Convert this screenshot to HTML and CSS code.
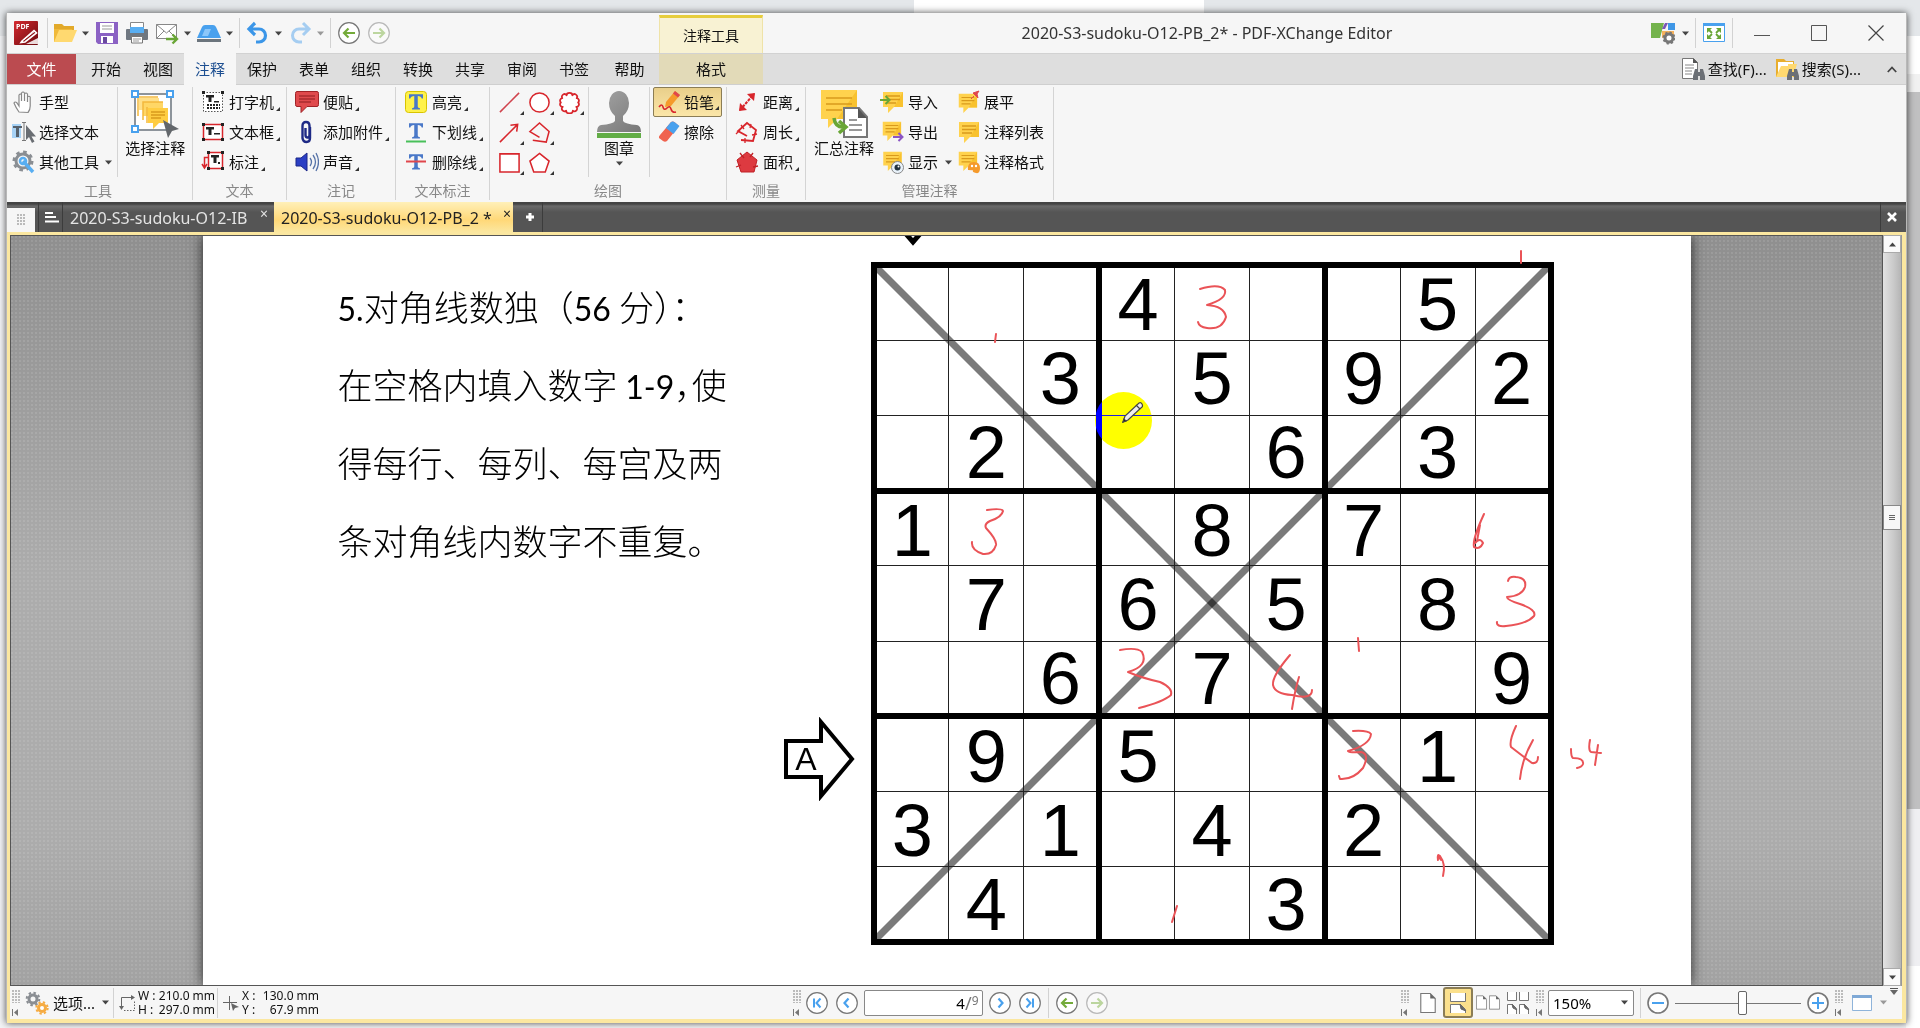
FILE: index.html
```html
<!DOCTYPE html>
<html lang="zh-CN">
<head>
<meta charset="utf-8">
<title>2020-S3-sudoku-O12-PB_2* - PDF-XChange Editor</title>
<link rel="stylesheet" href="styles.css">
</head>
<body>
<svg class="defs" aria-hidden="true">
  <defs>
    <linearGradient id="redg" x1="0" y1="0" x2="1" y2="1"><stop offset="0" stop-color="#d42a2f"/><stop offset="1" stop-color="#6d0a0f"/></linearGradient>
    <linearGradient id="gry" x1="0" y1="0" x2="1" y2="1"><stop offset="0" stop-color="#a4a4a4"/><stop offset="1" stop-color="#777"/></linearGradient>
  </defs>
  <symbol id="caret" viewBox="0 0 7 5"><path d="M0 0.500h7L3.500 4.500z" fill="currentColor"/></symbol>
  <symbol id="note" viewBox="0 0 24 24"><path d="M3 2h20v15h-9l-6 6v-6H3z" fill="#ffd24d"/><path d="M23 2v15h-9z" fill="#f8c22f"/><path d="M6 6h14M6 9.500h14M6 13h10" stroke="#d99a1c" stroke-width="1.300"/></symbol>
  <symbol id="back" viewBox="0 0 22 22"><circle cx="11" cy="11" r="10.300" fill="#fff" stroke="#777" stroke-width="1.200"/><path d="M17 11H6M10.500 6.500L6 11l4.500 4.500" fill="none" stroke="#74ab3a" stroke-width="2.200"/></symbol>
  <symbol id="fwd" viewBox="0 0 22 22"><circle cx="11" cy="11" r="10.300" fill="#fafafa" stroke="#b9b9b9" stroke-width="1.200"/><path d="M5 11h11M11.500 6.500L16 11l-4.500 4.500" fill="none" stroke="#bcd69f" stroke-width="2.200"/></symbol>
  <symbol id="tee" viewBox="0 0 16 18"><path d="M0 0h16v5h-1.500Q14 2 10 2v12q0 2 2.500 2v1.500h-9V16Q6 16 6 14V2Q2 2 1.500 5H0z" fill="#4a78c8"/></symbol>
  <symbol id="bino" viewBox="0 0 12 11"><path d="M2 0h3v3h2V0h3l2 7v4H7V7H5v4H0V7z" fill="#6b6f75"/></symbol>
  <symbol id="sheet" viewBox="0 0 14 18"><path d="M.500.500H9L13.500 5v12.500H.500z" fill="#fff" stroke="#777"/><path d="M9 .500V5h4.500z" fill="#666"/></symbol>
  <symbol id="first" viewBox="0 0 6 7"><path d="M.500 0v7" stroke="#777"/><path d="M6 0v7L2 3.500z" fill="#777"/></symbol>
</svg>

<div class="behind-tab"></div>
<div class="behind-scroll"></div>

<div class="window">
  <header class="titlebar">
    <svg class="logo" viewBox="0 0 24 24"><rect width="24" height="24" rx="1" fill="url(#redg)"/><text x="2" y="8" class="logo-text">PDF</text><path d="M8 20L20 9.500l2.500 2.500L11 21l-4 .500z" fill="none" stroke="#fff" stroke-width="1.600"/><path d="M10 18.500L21 10" stroke="#fff" stroke-width="1"/><path d="M12 23h12v-6z" fill="#fff" opacity=".85"/></svg>
    <span class="vsep"></span>
    <nav class="quick" aria-label="快速访问">
      <button class="qbtn" aria-label="打开"><svg class="i24" viewBox="0 0 24 24"><path d="M1 3h8l2 2h10v6H1z" fill="#e2a92a"/><path d="M1 5v16h18V8H1z" fill="#f0b93a"/><path d="M1 21L6 9h18l-5 12z" fill="#ffd970"/></svg><svg class="car"><use href="#caret"/></svg></button>
      <button class="qbtn" aria-label="保存"><svg class="i24" viewBox="0 0 24 24"><path d="M1 1h22v22H3l-2-2z" fill="#8b62c4"/><path d="M5 2h14v10H5z" fill="#fff"/><path d="M7 5h10M7 8h10" stroke="#999"/><path d="M6 15h12v7H6z" fill="#fff"/><path d="M8 16h4v6H8z" fill="#6a4aa0"/></svg></button>
      <button class="qbtn" aria-label="打印"><svg class="i24" viewBox="0 0 24 24"><path d="M5.500 1.500h13V8h-13z" fill="#fff" stroke="#888"/><rect x="1" y="8" width="22" height="11" rx="1" fill="#6f7780"/><path d="M5 6h14v6H5z" fill="#58aef2"/><path d="M6.500 15.500h11V22h-11z" fill="#fff" stroke="#777"/><path d="M8 18h8M8 20h6" stroke="#999"/></svg></button>
      <button class="qbtn" aria-label="邮件"><svg class="i24" viewBox="0 0 24 24"><path d="M1.500 3.500h20v14h-20z" fill="#fff" stroke="#888"/><path d="M1.500 3.500l10 8.500 10-8.500M1.500 17.500L9 10M21.500 17.500L14 10" fill="none" stroke="#888"/><path d="M11 18h11M17.500 13.500L22 18l-4.500 4.500" fill="none" stroke="#69a636" stroke-width="2.400"/></svg><svg class="car"><use href="#caret"/></svg></button>
      <button class="qbtn" aria-label="扫描"><svg class="i24" viewBox="0 0 24 24"><path d="M0 17L5 6q1-2 3-2h8q2 0 3 2l5 11z" fill="#49a1ee"/><path d="M5 15l3-7h6l-3 7z" fill="#8cc7fa"/><path d="M0 18h24v3H0z" fill="#6c757d"/></svg><svg class="car"><use href="#caret"/></svg></button>
      <span class="vsep"></span>
      <button class="qbtn" aria-label="撤销"><svg class="i24" viewBox="0 0 24 24"><path d="M4 8h9a6 6 0 0 1 0 13h-3M9 2L3 8l6 6" fill="none" stroke="#3b96e8" stroke-width="3.200"/></svg><svg class="car"><use href="#caret"/></svg></button>
      <button class="qbtn" aria-label="重做"><svg class="i24" viewBox="0 0 24 24"><path d="M20 8h-9a6 6 0 0 0 0 13h3M15 2l6 6-6 6" fill="none" stroke="#a5cdf1" stroke-width="3"/></svg><svg class="car dim"><use href="#caret"/></svg></button>
      <span class="vsep"></span>
      <button class="round" aria-label="后退"><svg><use href="#back"/></svg></button>
      <button class="round" aria-label="前进"><svg><use href="#fwd"/></svg></button>
    </nav>
    <div class="context">注释工具</div>
    <h1 class="title">2020-S3-sudoku-O12-PB_2* - PDF-XChange Editor</h1>
    <div class="winbtns">
      <button class="qbtn" aria-label="界面选项"><svg class="i24" viewBox="0 0 24 24"><path d="M0 2h13L9 17H0z" fill="#74b34c"/><path d="M14 2h3l-3 6h-3z" fill="#7a55b8"/><path d="M17 2h7v7h-7z" fill="#3f97e6"/><path d="M11 10h12v4l-12 3z" fill="#f6b25c"/><circle cx="18" cy="17" r="4" fill="#fff" stroke="#777" stroke-width="3"/><circle cx="18" cy="17" r="5.500" fill="none" stroke="#777" stroke-width="2" stroke-dasharray="2.200 2.100"/></svg><svg class="car"><use href="#caret"/></svg></button>
      <span class="vsep"></span>
      <button class="qbtn" aria-label="全屏"><svg class="i24" viewBox="0 0 24 24"><path d="M1.500 2.500h21v18h-21z" fill="#fff" stroke="#49a1ee"/><path d="M1 2h22v3H1z" fill="#49a1ee"/><path d="M5 7h5L5 12zM19 7v5l-5-5zM5 18v-5l5 5zM19 18h-5l5-5z" fill="#69a636"/><path d="M6 8l4 4M18 8l-4 4M6 17l4-4M18 17l-4-4" stroke="#69a636" stroke-width="1.800"/></svg></button>
      <span class="vsep"></span>
      <button class="wbtn" aria-label="最小化"><svg viewBox="0 0 16 16"><path d="M0 10.500h16" stroke="#555"/></svg></button>
      <button class="wbtn" aria-label="最大化"><svg viewBox="0 0 16 16"><path d="M.500.500h15v15H.500z" fill="none" stroke="#555"/></svg></button>
      <button class="wbtn" aria-label="关闭"><svg viewBox="0 0 16 16"><path d="M.500.500l15 15M15.500.500l-15 15" stroke="#444" stroke-width="1.200"/></svg></button>
    </div>
  </header>

  <nav class="tabs" aria-label="功能区">
    <button class="file">文件</button>
    <button class="tab">开始</button><button class="tab">视图</button><button class="tab on">注释</button><button class="tab">保护</button><button class="tab">表单</button><button class="tab">组织</button><button class="tab">转换</button><button class="tab">共享</button><button class="tab">审阅</button><button class="tab">书签</button><button class="tab help">帮助</button>
    <button class="tab fmt">格式</button>
    <div class="finders">
      <button class="find"><svg class="i24" viewBox="0 0 24 24"><path d="M1.500 1.500h11l4 4v16h-15z" fill="#fff" stroke="#777"/><path d="M12 1l5 5h-5z" fill="#555"/><path d="M4 8h9M4 11h9M4 14h7M4 17h7" stroke="#888"/><use href="#bino" x="12" y="12" width="12" height="11"/></svg>查找(F)...</button>
      <button class="find"><svg class="i24" viewBox="0 0 24 24"><path d="M1 2h8l2 2h8v16H1z" fill="#e8ae2e"/><path d="M3 5h15v12H3z" fill="#fff"/><path d="M1 20L6 9h7V7h9l-4 13z" fill="#ffd970"/><use href="#bino" x="12" y="12" width="12" height="11"/></svg>搜索(S)...</button>
      <button class="fold" aria-label="折叠"><svg viewBox="0 0 10 7"><path d="M.800 6L5 1.500 9.200 6" fill="none" stroke="#444" stroke-width="1.800"/></svg></button>
    </div>
  </nav>

  <section class="ribbon">
    <div class="group g-tools">
      <div class="gbody">
        <div class="col c-tools">
          <button class="cmd"><svg class="i24" viewBox="0 0 24 24"><path d="M7 22q-3-4-5-9 1-2 3 0l2 3V5q1.500-2 2.500 0v6V3q1.500-2 3 0v8V4q1.500-2 3 0v8V7q1.500-1.500 2.700 0v9q0 4-2.200 6.500z" fill="#fff" stroke="#888" stroke-width="1.200"/></svg>手型</button>
          <button class="cmd"><svg class="i24" viewBox="0 0 24 24"><path d="M0 4h9v14H0z" fill="#a7d2f5"/><path d="M1 6h9v2H7v9H4V8H1z" fill="#56616c"/><path d="M10 2.500h4M12 3v17M10 20.500h4" stroke="#777"/><path d="M14 5v15l3-3 3 6 2.500-1.500-3-5H24z" fill="#6a6e73"/></svg>选择文本</button>
          <button class="cmd"><svg class="i24" viewBox="0 0 24 24"><circle cx="11" cy="11" r="7" fill="none" stroke="#8a8e93" stroke-width="3"/><circle cx="11" cy="11" r="9.200" fill="none" stroke="#8a8e93" stroke-width="2.600" stroke-dasharray="3.600 3.600"/><path d="M11 11l10 11" stroke="#58aef2" stroke-width="3.400"/><circle cx="11" cy="11" r="3" fill="none" stroke="#58aef2" stroke-width="2.600"/></svg>其他工具<svg class="car"><use href="#caret"/></svg></button>
        </div>
        <button class="big b-sel"><svg class="i48" viewBox="0 0 48 48"><path d="M4 4h36v36H4z" fill="#fff" stroke="#8d949b" stroke-width="2"/><path d="M8 8h20v12H8z" fill="#ffe08a"/><path d="M12 12h20v14H12z" fill="#ffd766"/><path d="M17 18h20v15h-9l-6 6v-6h-5z" fill="#ffcd42"/><path d="M7 26V7h20M12 30V12h20M16 33V17" fill="none" stroke="#f3b83c" stroke-width="1.500"/><path d="M20 22h14M20 25h14M20 28h10" stroke="#d99a1c" stroke-width="1.300"/><g fill="#fff" stroke="#49a1ee" stroke-width="2"><path d="M1 1h6v6H1zM36 1h6v6h-6zM1 36h6v6H1z"/></g><path d="M32 30l16 9-7 2-4 7z" fill="#63676b"/></svg>选择注释</button>
      </div>
      <div class="glabel">工具</div>
    </div>

    <div class="group g-text">
      <div class="gbody"><div class="col">
        <button class="cmd more"><svg class="i24" viewBox="0 0 24 24"><path d="M2.500 2.500h19v19h-19z" fill="#fff" stroke="#555" stroke-dasharray="1.500 1.500"/><path d="M5 5h8v2.500h-2.500V12h-3V7.500H5zM13 11h5v1.500h-5z" fill="#222"/><path d="M6 15h13M6 18h13" stroke="#222" stroke-width="2" stroke-dasharray="2 1"/><path d="M1 1h3v3H1zM20 1h3v3h-3z" fill="#222"/></svg>打字机</button>
        <button class="cmd more"><svg class="i24" viewBox="0 0 24 24"><path d="M2.500 4.500h19v15h-19z" fill="#fff" stroke="#d8262c" stroke-width="1.500"/><path d="M5 7h8v2.500h-2.500V15h-3V9.500H5zM13 13h6v1.500h-6z" fill="#222"/><path d="M1 3h3v3H1zM20 3h3v3h-3zM1 18h3v3H1zM20 18h3v3h-3z" fill="#222"/></svg>文本框</button>
        <button class="cmd more"><svg class="i24" viewBox="0 0 24 24"><path d="M7.500 2.500h14v16h-14z" fill="#fff" stroke="#d8262c" stroke-width="1.500"/><path d="M10 5h8v2.500h-2.500V13h-3V7.500H10zM17 12h2v2h-2z" fill="#222"/><path d="M6 1h3v3H6zM20 1h3v3h-3zM6 17h3v3H6zM20 17h3v3h-3z" fill="#222"/><path d="M7 7.500H3.500V18M1 14l2.500 4L6 14" fill="none" stroke="#d8262c" stroke-width="1.500"/></svg>标注</button>
      </div></div>
      <div class="glabel">文本</div>
    </div>

    <div class="group g-note">
      <div class="gbody"><div class="col">
        <button class="cmd more"><svg class="i24" viewBox="0 0 24 24"><path d="M2 1.500h20q1.500 0 1.500 2v11q0 2-1.500 2H12l-6 6v-6H2q-1.500 0-1.500-2v-11q0-2 1.500-2z" fill="#e04a4d" stroke="#a02327"/><path d="M4 6h16M4 9h16M4 12h12" stroke="#8d1c20" stroke-width="1.200"/></svg>便贴</button>
        <button class="cmd more"><svg class="i24" viewBox="0 0 24 24"><path d="M15 7v11q0 4-3.500 4T7.500 18V6q0-4 3.500-4t3.500 4v9q0 2.500-2 2.500t-2-2.500V8" fill="none" stroke="#1e2a86" stroke-width="2.400"/></svg>添加附件</button>
        <button class="cmd more"><svg class="i24" viewBox="0 0 24 24"><path d="M1 8h5l6-5v18l-6-5H1z" fill="#2b3fc4" stroke="#1a2688"/><path d="M15 8q3 4 0 8M18 5q5 7 0 14M21 3q5 9 0 18" fill="none" stroke="#5673a8" stroke-width="1.300"/></svg>声音</button>
      </div></div>
      <div class="glabel">注记</div>
    </div>

    <div class="group g-mark">
      <div class="gbody"><div class="col">
        <button class="cmd more"><svg class="i24" viewBox="0 0 24 24"><rect x="1.500" y="1.500" width="21" height="21" rx="3" fill="#fff24a" stroke="#d9c400"/><use href="#tee" x="5" y="4" width="14" height="16"/></svg>高亮</button>
        <button class="cmd more"><svg class="i24" viewBox="0 0 24 24"><use href="#tee" x="5" y="3" width="14" height="16"/><path d="M2 21.500h20" stroke="#49c05a" stroke-width="2"/></svg>下划线</button>
        <button class="cmd more"><svg class="i24" viewBox="0 0 24 24"><use href="#tee" x="5" y="4" width="14" height="16"/><path d="M2 11.500h20" stroke="#e0474c" stroke-width="2"/></svg>删除线</button>
      </div></div>
      <div class="glabel">文本标注</div>
    </div>

    <div class="group g-draw">
      <div class="gbody">
        <div class="shapes">
          <button class="shape" aria-label="直线"><svg viewBox="0 0 24 24"><path d="M2 22L22 2" stroke="#d0434d" stroke-width="1.600"/></svg></button>
          <button class="shape" aria-label="椭圆"><svg viewBox="0 0 24 24"><circle cx="12" cy="12" r="10" fill="#fff" stroke="#d8262c" stroke-width="1.600"/></svg></button>
          <button class="shape" aria-label="云形"><svg viewBox="0 0 24 24"><path d="M9 4.500a3 2.500 0 0 1 6 0 2.600 2.600 0 0 1 4.500 3 2.600 2.600 0 0 1 1.500 4.500 2.600 2.600 0 0 1-2 4.500 2.600 2.600 0 0 1-3.500 4 3 2.500 0 0 1-7 0 2.600 2.600 0 0 1-3.500-4 2.600 2.600 0 0 1-2-4.500 2.600 2.600 0 0 1 1.500-4.500 2.600 2.600 0 0 1 4.500-3z" fill="#fff" stroke="#d8262c" stroke-width="1.800" stroke-linejoin="round"/></svg></button>
          <button class="shape" aria-label="箭头"><svg viewBox="0 0 24 24"><path d="M2 22L20 4M13 4.500L20.500 3.500 19.500 11" fill="none" stroke="#d8262c" stroke-width="1.600"/></svg></button>
          <button class="shape" aria-label="折线"><svg viewBox="0 0 24 24"><path d="M12 17L2 11 12 2l10 9-3 11-14-2" fill="none" stroke="#d8262c" stroke-width="1.600"/></svg></button>
          <span></span>
          <button class="shape" aria-label="矩形"><svg viewBox="0 0 24 24"><path d="M2 3h20v19H2z" fill="#fff" stroke="#d8262c" stroke-width="1.600"/></svg></button>
          <button class="shape" aria-label="多边形"><svg viewBox="0 0 24 24"><path d="M12 2.500l10 8L18 22H6L2 10.500z" fill="#fff" stroke="#d8262c" stroke-width="1.600"/></svg></button>
        </div>
        <button class="big b-stamp"><svg class="i48" viewBox="0 0 48 48"><path d="M14 13a10 12 0 0 1 20 0q0 8-6 13v5q2 3 14 4 4 1 4 7H2q0-6 4-7 12-1 14-4v-5q-6-5-6-13z" fill="url(#gry)"/><path d="M2 43h44v5H2z" fill="#62ad46"/></svg>图章<svg class="car"><use href="#caret"/></svg></button>
        <div class="col c-pencil">
          <button class="cmd more pressed"><svg class="i24" viewBox="0 0 24 24"><path d="M9 12L18 1l5 4-9 11-6 1z" fill="#f59a2b"/><path d="M18 1l5 4-2 2.500-5-4z" fill="#e0474c"/><path d="M2 17q3-4 4 0t4 1 4 1 5 3" fill="none" stroke="#d8262c" stroke-width="1.600"/></svg>铅笔</button>
          <button class="cmd"><svg class="i24" viewBox="0 0 24 24"><path d="M3 15L14 2q2-1 4 .500l4 3.500L10 21q-2 1.500-4 0l-4-3q-.500-1.500 1-3z" fill="#f0634f"/><path d="M9 8l5-6q2-1 4 .500l4.500 3.500-6 8z" fill="#49a1ee"/></svg>擦除</button>
        </div>
      </div>
      <div class="glabel">绘图</div>
    </div>

    <div class="group g-measure">
      <div class="gbody"><div class="col">
        <button class="cmd more"><svg class="i24" viewBox="0 0 24 24"><path d="M5 20L19 4" stroke="#d8262c" stroke-width="2" stroke-dasharray="3 1"/><path d="M12 4l8-1-1 8zM12 20l-8 1 1-8z" fill="#d8262c"/></svg>距离</button>
        <button class="cmd more"><svg class="i24" viewBox="0 0 24 24"><path d="M12 16L3 11 12 3l9 7-3 11-12-1" fill="none" stroke="#d8262c" stroke-width="1.800"/><path d="M6 5l3 4M16 4l-1 4M22 14l-5 1M10 18v5M1 14l4-4" stroke="#d8262c" stroke-width="1.300"/></svg>周长</button>
        <button class="cmd more"><svg class="i24" viewBox="0 0 24 24"><path d="M12 2l10 8-3 12H6L2 10z" fill="#dd3a40" stroke="#c02026"/><path d="M5 3l4 5M18 3l-3 4M23 16l-5 1M1 17l5-2" stroke="#c02026" stroke-width="1.300"/></svg>面积</button>
      </div></div>
      <div class="glabel">测量</div>
    </div>

    <div class="group g-manage">
      <div class="gbody">
        <button class="big b-sum"><svg class="i48" viewBox="0 0 48 48"><path d="M1 0h36v29H17L8 38v-9H1z" fill="#ffd24d"/><path d="M37 0v29H17z" fill="#f8c22f"/><path d="M6 8h26M6 14h26M6 20h16" stroke="#d99a1c" stroke-width="1.600"/><path d="M24 18h15l8 9v20H24z" fill="#fff" stroke="#777" stroke-width="2"/><path d="M38 18l9 10h-9z" fill="#555"/><path d="M29 30h8M29 35h13M29 40h13" stroke="#777" stroke-width="1.500"/><path d="M14 28q1 9 9 9M19 31l7 6-7 6" fill="none" stroke="#69a636" stroke-width="3.500"/></svg>汇总注释</button>
        <div class="col c-io">
          <button class="cmd"><svg class="i24" viewBox="0 0 24 24"><use href="#note"/><path d="M0 10h9M5.500 6L9.500 10l-4 4" fill="none" stroke="#69a636" stroke-width="2"/></svg>导入</button>
          <button class="cmd"><svg class="i24" viewBox="0 0 24 24"><use href="#note" width="22" height="22"/><path d="M13 17h9M18.500 13l4 4-4 4" fill="none" stroke="#8b55c4" stroke-width="2"/></svg>导出</button>
          <button class="cmd"><svg class="i24" viewBox="0 0 24 24"><use href="#note" width="23" height="22"/><circle cx="17.500" cy="17.500" r="6" fill="#e9f2fa" stroke="#888"/><circle cx="17.500" cy="17.500" r="3" fill="#24333f"/><circle cx="18.500" cy="16.500" r="1" fill="#fff"/></svg>显示<svg class="car"><use href="#caret"/></svg></button>
        </div>
        <div class="col">
          <button class="cmd"><svg class="i24" viewBox="0 0 24 24"><use href="#note" y="2" width="22" height="22"/><path d="M15 9l3-3M17 3l5 5-1-4 2-3-3 1z" fill="#e0474c" stroke="#e0474c"/></svg>展平</button>
          <button class="cmd"><svg class="i24" viewBox="0 0 24 24"><use href="#note"/></svg>注释列表</button>
          <button class="cmd"><svg class="i24" viewBox="0 0 24 24"><use href="#note" width="22" height="22"/><path d="M18 12q6 0 6 6t-4 5-3-2-5-1q-1-8 6-8z" fill="#f59a2b"/><circle cx="16" cy="16" r="1.200" fill="#fff"/><circle cx="20" cy="16" r="1.200" fill="#fff"/></svg>注释格式</button>
        </div>
      </div>
      <div class="glabel">管理注释</div>
    </div>
  </section>

  <nav class="docbar" aria-label="文档">
    <div class="dockgrip"><i></i></div>
    <button class="doclist" aria-label="文档列表"><svg viewBox="0 0 14 12"><path d="M0 2h8M0 6h11M0 10.500h14" stroke="#fff" stroke-width="2"/></svg></button>
    <button class="doc">2020-S3-sudoku-O12-IB<span class="x">×</span></button>
    <button class="doc active">2020-S3-sudoku-O12-PB_2 *<span class="x">×</span></button>
    <button class="add" aria-label="新建"><svg viewBox="0 0 10 10"><path d="M5 1v8M1 5h8" stroke="#fff" stroke-width="3"/></svg></button>
    <button class="docclose" aria-label="关闭文档"><svg viewBox="0 0 10 10"><path d="M1 1l8 8M9 1L1 9" stroke="#fff" stroke-width="2.600"/></svg></button>
  </nav>

  <main class="viewer">
    <div class="canvas">
      <article class="page">
        <svg class="prev-arrow" viewBox="0 0 30 10"><path d="M3-8L15 6 27-8" fill="none" stroke="#000" stroke-width="5"/></svg>
        <p class="rules"><b>5.</b>对角线数独（<b>56 </b>分<span class="half">）：</span><br>在空格内填入数字 <b>1-9</b><span class="half">，</span>使<br>得每行、每列、每宫及两<br>条对角线内数字不重复。</p>
        <svg class="mark" viewBox="0 0 72 84"><path d="M2 24h35V5l31 37-31 37V60H2z" fill="#fff" stroke="#000" stroke-width="4"/><text x="22" y="53" text-anchor="middle">A</text></svg>
        <div class="board">
          <svg class="diag" viewBox="0 0 683 683"><path d="M5 5l672 672"/><path d="M677 5L5 677"/></svg>
          <table class="sudoku">
            <tr><td><td><td><td>4<td><td><td><td>5<td></tr>
            <tr><td><td><td>3<td><td>5<td><td>9<td><td>2</tr>
            <tr><td><td>2<td><td><td><td>6<td><td>3<td></tr>
            <tr><td>1<td><td><td><td>8<td><td>7<td><td></tr>
            <tr><td><td>7<td><td>6<td><td>5<td><td>8<td></tr>
            <tr><td><td><td>6<td><td>7<td><td><td><td>9</tr>
            <tr><td><td>9<td><td>5<td><td><td><td>1<td></tr>
            <tr><td>3<td><td>1<td><td>4<td><td>2<td><td></tr>
            <tr><td><td>4<td><td><td><td>3<td><td><td></tr>
          </table>
          <svg class="ink" viewBox="871 262 683 683">
            <path d="M1200 289Q1219 283 1225 290 1227 299 1207 305 1224 306 1226 317 1222 330 1207 328 1199 327 1198 322"/>
            <path d="M996 334l-1 8"/>
            <path d="M1521 251v12" stroke-width="3"/>
            <path d="M987 510Q1002 508 1003 511 1002 517 990 521 984 524 986 528 997 540 996 545 993 555 983 554 971 550 972 542"/>
            <path d="M1484 514Q1472 540 1474 547 1480 550 1483 543 1480 537 1475 543M1480 525l-3 16"/>
            <path d="M1508 581Q1509 576 1516 577 1527 578 1525 587 1522 596 1507 597 1507 600 1520 604 1537 610 1534 616 1527 624 1506 626 1496 627 1497 622"/>
            <path d="M1358 638l1 13"/>
            <path d="M1120 650Q1137 647 1142 652 1149 666 1128 672 1142 678 1160 682 1173 688 1171 695 1163 702 1139 708"/>
            <path d="M1290 655Q1272 676 1273 685 1275 694 1292 695 1312 700 1312 690M1299 677Q1295 690 1292 709"/>
            <path d="M1353 731Q1368 730 1371 734 1370 745 1348 751 1350 753 1361 752 1370 754 1363 768 1353 780 1340 779l-1-3"/>
            <path d="M1516 726Q1509 741 1511 747 1520 754 1532 763 1538 764 1538 757M1533 740Q1522 759 1520 779"/>
            <path d="M1571 749Q1571 757 1573 758 1584 758 1583 764 1582 767 1577 768M1590 740Q1588 750 1591 752L1601 753M1598 745l-3 20"/>
            <path d="M1438 860Q1437 853 1440 856 1446 864 1443 876M1438 856l3 4"/>
            <path d="M1177 906l-5 16"/>
          </svg>
          <div class="halo"></div>
          <svg class="cursor" viewBox="0 0 22 22"><path d="M1 21l2-6L17 2q2-1 3 1t0 3L6 19z" fill="#eee" stroke="#444" stroke-width="1.200"/><path d="M14 4l4 4M1 21l1-3 2 2z" stroke="#444" stroke-width="1.200"/></svg>
        </div>
      </article>
    </div>
    <div class="vscroll" role="scrollbar" aria-label="垂直滚动">
      <button class="sbtn" aria-label="向上"><svg class="car flip"><use href="#caret"/></svg></button>
      <div class="track"><div class="thumb"></div></div>
      <button class="sbtn" aria-label="向下"><svg class="car"><use href="#caret"/></svg></button>
    </div>
  </main>

  <footer class="status">
    <div class="sleft">
      <span class="grip"><svg><use href="#first"/></svg></span>
      <button class="opt"><svg class="i24" viewBox="0 0 24 24"><circle cx="8" cy="8" r="4" fill="none" stroke="#8a8e93" stroke-width="3"/><circle cx="8" cy="8" r="6.300" fill="none" stroke="#8a8e93" stroke-width="2" stroke-dasharray="2.500 2.400"/><circle cx="17" cy="17" r="3.500" fill="#fff" stroke="#f5ab42" stroke-width="3"/><circle cx="17" cy="17" r="5.700" fill="none" stroke="#f5ab42" stroke-width="2" stroke-dasharray="2.300 2.200"/></svg>选项...<svg class="car"><use href="#caret"/></svg></button>
      <span class="vsep"></span>
      <svg class="i18" viewBox="0 0 18 18"><path d="M3.500 13V3.500H14" fill="none" stroke="#666"/><path d="M13 1l4 2.500L13 6zM1 12h5l-2.500 4z" fill="#666"/><path d="M6 16.500h10.500V7" fill="none" stroke="#666" stroke-dasharray="1.500 1.500"/></svg>
      <dl class="dims"><dt>W :</dt><dd>210.0 mm</dd><dt>H :</dt><dd>297.0 mm</dd></dl>
      <span class="vsep"></span>
      <svg class="i18" viewBox="0 0 18 18"><path d="M7.500 2v14M1 8.500h14" stroke="#666"/><path d="M9 9l8 4-4 1-2 3z" fill="#666"/></svg>
      <dl class="dims"><dt>X :</dt><dd>130.0 mm</dd><dt>Y :</dt><dd>67.9 mm</dd></dl>
    </div>
    <div class="snav">
      <span class="grip"><svg><use href="#first"/></svg></span>
      <button class="round" aria-label="首页"><svg viewBox="0 0 22 22"><circle cx="11" cy="11" r="10.300" fill="#fff" stroke="#777" stroke-width="1.200"/><path d="M8 6.500v9M14.500 6.500L10.500 11l4 4.500" fill="none" stroke="#49a1ee" stroke-width="2"/></svg></button>
      <button class="round" aria-label="上一页"><svg viewBox="0 0 22 22"><circle cx="11" cy="11" r="10.300" fill="#fff" stroke="#777" stroke-width="1.200"/><path d="M12.500 6.500L8.500 11l4 4.500" fill="none" stroke="#49a1ee" stroke-width="2.200"/></svg></button>
      <label class="pagebox"><input type="text" value="4" aria-label="页码"><span class="slash">/</span><span class="total">9</span></label>
      <button class="round" aria-label="下一页"><svg viewBox="0 0 22 22"><circle cx="11" cy="11" r="10.300" fill="#fff" stroke="#777" stroke-width="1.200"/><path d="M9.500 6.500L13.500 11l-4 4.500" fill="none" stroke="#49a1ee" stroke-width="2.200"/></svg></button>
      <button class="round" aria-label="末页"><svg viewBox="0 0 22 22"><circle cx="11" cy="11" r="10.300" fill="#fff" stroke="#777" stroke-width="1.200"/><path d="M14 6.500v9M7.500 6.500L11.500 11l-4 4.500" fill="none" stroke="#49a1ee" stroke-width="2"/></svg></button>
      <span class="vsep"></span>
      <button class="round" aria-label="后退"><svg><use href="#back"/></svg></button>
      <button class="round" aria-label="前进"><svg><use href="#fwd"/></svg></button>
    </div>
    <div class="sright">
      <span class="grip"><svg><use href="#first"/></svg></span>
      <button class="lay" aria-label="单页"><svg class="i24" viewBox="0 0 24 24"><use href="#sheet" x="4" y="2" width="16" height="20"/></svg></button>
      <button class="lay sel" aria-label="连续"><svg class="i24" viewBox="0 0 24 24"><path d="M4.500 2v8.500h15V2M4.500 22V13.500h10l5 5V22" fill="#fff" stroke="#777"/><path d="M14 13l6 7-5-2z" fill="#666" stroke="#666"/></svg></button>
      <button class="lay" aria-label="双页"><svg class="i24" viewBox="0 0 24 24"><use href="#sheet" x="0" y="4" width="11" height="15"/><use href="#sheet" x="13" y="4" width="11" height="15"/></svg></button>
      <button class="lay" aria-label="双页连续"><svg class="i24" viewBox="0 0 24 24"><path d="M1.500 1v8.500h9V1M13.500 1v8.500h9V1M1.500 23V13.500h5l4 4V23M13.500 23V13.500h5l4 4V23" fill="#fff" stroke="#777"/><path d="M6 13l5 6-4-2zM18 13l5 6-4-2z" fill="#666" stroke="#666"/></svg></button>
      <span class="grip"><svg><use href="#first"/></svg></span>
      <span class="combo"><select aria-label="缩放"><option>150%</option></select><svg class="car"><use href="#caret"/></svg></span>
      <span class="vsep"></span>
      <button class="round" aria-label="缩小"><svg viewBox="0 0 22 22"><circle cx="11" cy="11" r="10" fill="#fff" stroke="#777" stroke-width="1.600"/><path d="M5 11h12" stroke="#49a1ee" stroke-width="2"/></svg></button>
      <input class="zoom" type="range" min="0" max="100" value="54" aria-label="缩放比例">
      <button class="round" aria-label="放大"><svg viewBox="0 0 22 22"><circle cx="11" cy="11" r="10" fill="#fff" stroke="#777" stroke-width="1.600"/><path d="M5 11h12M11 5v12" stroke="#49a1ee" stroke-width="2"/></svg></button>
      <span class="grip"><svg><use href="#first"/></svg></span>
      <button class="lay" aria-label="窗口"><svg class="i24" viewBox="0 0 24 24"><path d="M2.500 4.500h19v15h-19z" fill="#fff" stroke="#8fb4da"/><path d="M2 4h20v3H2z" fill="#7fa9d6"/></svg></button>
      <svg class="car dim"><use href="#caret"/></svg>
      <svg class="overflow" viewBox="0 0 8 8"><path d="M0 1.500h8" stroke="#555"/><path d="M0 3h8L4 8z" fill="#666"/></svg>
    </div>
  </footer>
</div>
</body>
</html>
```
FILE: styles.css
```css
* { box-sizing: border-box; }

html, body { height: 100%; }

body {
  margin: 0;
  overflow: hidden;
  background: linear-gradient(#e4e7ea 36px, #f3f4f6 36px);
  font-family: "Noto Sans", "Noto Sans CJK SC", sans-serif;
  font-size: 15px;
  line-height: 20px;
  color: #111;
}

button {
  margin: 0;
  padding: 0;
  border: 0;
  background: none;
  font: inherit;
  color: inherit;
  display: flex;
  align-items: center;
  white-space: nowrap;
}

svg { display: block; flex: none; }

.defs { position: absolute; width: 0; height: 0; }

/* desktop behind the editor window */
.behind-tab {
  position: absolute;
  left: 914px;
  top: 0;
  width: 290px;
  height: 36px;
  background: #fff;
}

.behind-scroll {
  position: absolute;
  right: 0;
  top: 36px;
  bottom: 0;
  width: 14px;
  background: linear-gradient(#fff 38px, #f1f1f1 38px 56px, #c0c0c1 56px 773px, #efeff2 773px 930px, #fff 930px);
}

.window {
  position: relative;
  display: flex;
  flex-direction: column;
  height: calc(100vh - 18px);
  margin: 13px 13px 5px 6px;
  border: solid #b8b8b8;
  border-width: 0 1px;
  background: #f6f6f6;
  box-shadow: 0 0 7px rgba(0, 0, 0, .7);
}

.i18 { width: 18px; height: 18px; }
.i24 { width: 24px; height: 24px; }
.i48 { width: 48px; height: 48px; }
.car { width: 7px; height: 5px; color: #444; }
.car.dim { color: #999; }
.flip { transform: rotate(180deg); }

.vsep {
  width: 1px;
  height: 30px;
  background: #d2d2d2;
}

/* title bar */
.titlebar {
  display: flex;
  align-items: center;
  height: 40px;
  flex: none;
}

.titlebar > .logo { width: 24px; height: 24px; margin: 0 9px 0 7px; }
.logo-text { font: 700 7px "Open Sans", sans-serif; fill: #fff; }

.quick { display: flex; align-items: center; flex: none; gap: 6px; width: 341px; margin-left: 5px; }
.quick .qbtn { gap: 5px; }
.quick .round { margin: 0 1px; }
.qbtn { gap: 7px; }
.round svg { width: 22px; height: 22px; }

.context {
  align-self: stretch;
  flex: none;
  width: 104px;
  margin: 2px 0 0 265px;
  padding-top: 8px;
  text-align: center;
  font-size: 14px;
  border-top: 3px solid #e6cd3c;
  border-left: 1px solid #efe3a8;
  border-right: 1px solid #efe3a8;
  background: #f8f2d3;
}

.title {
  flex: 1;
  margin: 0;
  text-align: center;
  font-size: 16px;
  font-weight: 400;
  color: #333;
  white-space: nowrap;
}

.winbtns { display: flex; align-items: center; padding-right: 2px; }
.winbtns .vsep { margin: 0 6px; }
.winbtns .vsep + .wbtn { margin-left: -6px; }
.wbtn { width: 57px; height: 30px; justify-content: center; }
.wbtn svg { width: 16px; height: 16px; }

/* ribbon tabs */
.tabs {
  display: flex;
  height: 32px;
  flex: none;
  background: #dedede;
  border-bottom: 1px solid #cfcfcf;
  border-top: 1px solid #d2d2d2;
}

.file, .tab { justify-content: center; }
.file { width: 69px; margin-right: 4px; background: #bb4b50; color: #fff; }
.tab { width: 52px; }
.tab.on { background: #f6f6f6; color: #1d4f91; margin: -1px 0; }
.tab.help { width: 59px; }
.tab.fmt { width: 104px; background: #e2dab8; }

.finders { display: flex; margin-left: auto; padding-right: 9px; gap: 8px; }
.find { gap: 3px; }
.fold { margin-left: 18px; }
.fold svg { width: 10px; height: 7px; }

/* ribbon */
.ribbon { display: flex; height: 117px; flex: none; }

.group {
  display: flex;
  flex-direction: column;
  margin: 2px 0;
  padding-left: 8px;
  border-right: 1px solid #d4d4d4;
}

.gbody { display: flex; height: 90px; }
.glabel { margin: 4px 0 0 -8px; text-align: center; font-size: 14px; color: #888; }

.g-tools { width: 186px; padding-left: 5px; }
.g-text, .g-mark { width: 94px; }
.g-note { width: 109px; }
.g-draw { width: 237px; }
.g-measure { width: 79px; }
.g-manage { width: 248px; }

.col { display: flex; flex-direction: column; align-items: flex-start; }
.c-tools { width: 107px; border-right: 1px solid #d4d4d4; }
.c-pencil { padding-left: 3px; border-left: 1px solid #d4d4d4; }
.c-io { width: 76px; }

.cmd { height: 30px; gap: 4px; }
.c-tools .cmd, .c-pencil .cmd { gap: 3px; }
.cmd .car { margin-left: 3px; }

.more::after {
  content: "";
  align-self: flex-end;
  margin: 0 0 6px -2px;
  border: 2px solid #333;
  border-top-color: transparent;
  border-left-color: transparent;
}

.pressed {
  width: 69px;
  padding-left: 3px;
  border: 1px solid #8b7d55;
  border-radius: 2px;
  background: linear-gradient(#e9cf8a, #fbe6a8);
}

.c-pencil .cmd + .cmd { padding-left: 4px; }

.big { flex-direction: column; padding-top: 3px; }
.b-sel { width: 74px; }
.b-stamp { width: 60px; }
.b-stamp .car { margin-top: 3px; }
.b-sum { width: 66px; padding-right: 6px; }

.shapes {
  display: grid;
  grid-template-columns: repeat(3, 30px);
  grid-auto-rows: 30px;
  border-right: 1px solid #d4d4d4;
}

.shape svg { width: 23px; height: 23px; }
.shape::after {
  content: "";
  align-self: flex-end;
  margin: 0 0 2px -1px;
  border: 2px solid #333;
  border-top-color: transparent;
  border-left-color: transparent;
}

/* document tabs */
.docbar {
  display: flex;
  height: 33px;
  flex: none;
  background: linear-gradient(#444 2px, #6a6a6a 4px, #555 10px, #555);
  border-bottom: 3px solid #fbe7a0;
}

.dockgrip { width: 28px; margin-top: 6px; padding: 6px 10px; background: #f6f6f6; margin-right: 3px; }
.dockgrip i, .grip::before {
  content: "";
  display: block;
  width: 8px;
  height: 12px;
  background: radial-gradient(circle at 1px 1px, #bbb 1px, transparent 1px) 0 0 / 3px 3px;
}

.doclist { width: 25px; padding-left: 6px; border: solid #3c3c3c; border-width: 0 1px; }
.doclist svg { width: 14px; height: 12px; }

.doc { padding: 2px 6px 0 7px; color: #e4e4e4; font-size: 16px; justify-content: space-between; width: 211px; }
.doc .x { font-size: 14px; align-self: flex-start; margin-top: 1px; line-height: 18px; }
.doc.active { width: 239px; padding-right: 2px; background: linear-gradient(#fff0b8, #ffd878 60%, #fbe7a0); color: #222; }

.add { width: 30px; padding-left: 12px; border-right: 1px solid #3c3c3c; }
.add svg, .docclose svg { width: 10px; height: 10px; }
.docclose { width: 26px; margin-left: auto; padding-left: 6px; border-left: 1px solid #3c3c3c; }

/* document area */
.viewer {
  display: flex;
  flex: 1;
  min-height: 0;
  border: solid #fbe7a0;
  border-width: 0 4px 0 3px;
}

.canvas {
  display: flex;
  justify-content: center;
  flex: 1;
  min-width: 0;
  overflow: hidden;
  border: 1px solid #555;
  background:
    radial-gradient(circle at 1px 1px, rgba(255, 255, 255, .1) 1px, transparent 1px) 0 0 / 4px 4px,
    linear-gradient(#8f8f8f, #acacac 45%, #acacac 80%, #a2a2a2);
}

.page {
  display: flex;
  align-items: flex-start;
  position: relative;
  flex: 0 0 1488px;
  padding: 26px 0 0 135px;
  background: #fff;
  box-shadow: 0 0 12px rgba(0, 0, 0, .75);
}

.prev-arrow { position: absolute; left: 695px; top: 0; width: 30px; height: 10px; }

.rules {
  width: 446px;
  margin: 5px 0 0;
  font-family: "Noto Sans CJK SC", sans-serif;
  font-size: 35px;
  font-weight: 300;
  line-height: 78px;
  color: #000;
  white-space: nowrap;
}

.rules b { font-family: Lato, sans-serif; font-size: 32px; font-weight: 400; line-height: 32px; }
.rules .half { font-feature-settings: "halt"; }

.mark { width: 72px; height: 84px; margin: 455px 15px 0 0; }
.mark text { font: 32px "Liberation Sans", sans-serif; }

.board { position: relative; width: 683px; height: 683px; }
.diag { position: absolute; left: 0; top: 0; width: 683px; height: 683px; }
.diag path { stroke: #000; stroke-opacity: .52; stroke-width: 7; }

.sudoku {
  position: relative;
  width: 683px;
  height: 683px;
  table-layout: fixed;
  border-collapse: collapse;
  border: 6px solid #000;
}

.sudoku td {
  padding: 3px 0 0;
  height: 75px;
  border: 1px solid #222;
  text-align: center;
  vertical-align: middle;
  font: 74px/66px "Liberation Sans", Arial, sans-serif;
  color: #000;
}

.sudoku td:nth-child(3n):not(:last-child) { border-right: 6px solid #000; }
.sudoku tr:nth-child(3n):not(:last-child) td { border-bottom: 6px solid #000; }

.ink { position: absolute; left: 0; top: 0; width: 683px; height: 683px; overflow: visible; }
.ink path { fill: none; stroke: #ea5357; stroke-width: 2; stroke-linecap: round; stroke-linejoin: round; }

/* pointer highlight inverts what lies below it */
.halo {
  position: absolute;
  left: 224px;
  top: 130px;
  width: 57px;
  height: 57px;
  border-radius: 50%;
  background: #00f;
  mix-blend-mode: difference;
}

.cursor { position: absolute; left: 251px; top: 139px; width: 22px; height: 22px; }

.vscroll { display: flex; flex-direction: column; width: 19px; border-right: 1px solid #999; }
.sbtn { height: 18px; flex: none; justify-content: center; background: #fafafa; border: 1px solid #aaa; }
.track { flex: 1; padding-top: 252px; background: linear-gradient(90deg, #e2e2e2, #c9c9c9 60%, #b5b5b5); }
.thumb {
  height: 25px;
  border: 1px solid #888;
  background: linear-gradient(#666, #666) 5px 9px / 6px 1px no-repeat, linear-gradient(#666, #666) 5px 11px / 6px 1px no-repeat, linear-gradient(#666, #666) 5px 13px / 6px 1px no-repeat, #f7f7f7;
}

/* status bar */
.status {
  display: flex;
  align-items: center;
  height: 37px;
  flex: none;
  padding: 0 4px 0 2px;
  border: solid #fbe7a0;
  border-width: 0 4px 4px 3px;
  background: #f6f6f6;
}

.sleft, .snav, .sright { display: flex; align-items: center; }
.sleft { flex: 1; gap: 4px; }
.snav { gap: 8px; margin-right: 10px; }
.sright { flex: 1; justify-content: flex-end; gap: 6px; }

.grip { width: 9px; height: 26px; }
.grip svg { width: 6px; height: 7px; margin-top: 6px; }
.grip::before { height: 13px; }

.opt { gap: 4px; }
.opt .car { margin-left: 3px; }

.dims {
  display: grid;
  grid-template-columns: 20px 57px;
  margin: 0 0 0 -2px;
  font-size: 12px;
  line-height: 14px;
}

.dims dt, .dims dd { margin: 0; white-space: nowrap; }
.dims dd { text-align: right; }
.dims + .vsep { margin-left: -2px; }

.snav .grip { margin-right: -4px; }
.snav .vsep { margin: 0 -1px; }

.pagebox {
  display: flex;
  align-items: center;
  width: 119px;
  height: 26px;
  margin: 0 -2px;
  padding-right: 3px;
  border: 1px solid #888;
  border-radius: 2px;
  background: #fff;
}

.pagebox input { flex: 1; min-width: 0; border: 0; padding: 0; outline: 0; background: none; text-align: right; font: inherit; color: #000; }
.slash { font-size: 18px; color: #777; }
.total { font-size: 12px; color: #777; line-height: 12px; margin-bottom: 4px; }

.lay { height: 31px; }
.lay.sel { width: 30px; margin: 0 -3px; justify-content: center; border: 2px solid #8b7d55; border-radius: 3px; background: #fbe08c; }

.combo { display: flex; align-items: center; width: 86px; height: 26px; margin-left: -3px; border: 1px solid #888; border-radius: 2px; background: #fff; }
.combo select { appearance: none; flex: 1; width: 74px; border: 0; padding: 0 4px; background: none; font: inherit; color: #000; }
.combo .car { margin-right: 5px; }

.zoom { appearance: none; width: 126px; height: 24px; margin: 0; background: linear-gradient(#777, #777) 0 12px / 100% 1px no-repeat; }
.zoom::-webkit-slider-thumb { appearance: none; width: 9px; height: 24px; border: 1px solid #666; border-radius: 2px; background: #fff; }

.overflow { align-self: flex-start; width: 8px; height: 8px; margin-left: -3px; }
```
